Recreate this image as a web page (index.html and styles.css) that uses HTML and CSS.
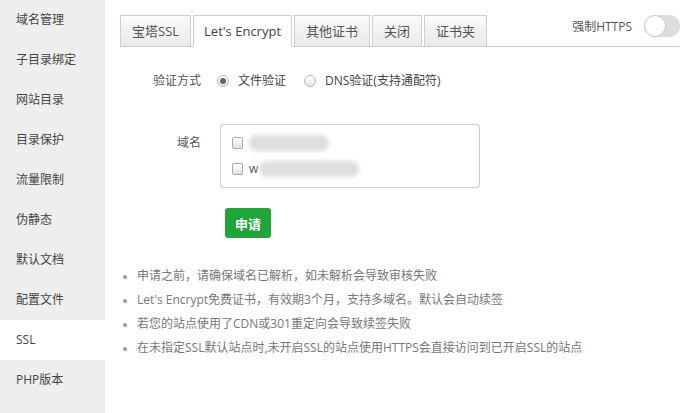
FILE: index.html
```html
<!DOCTYPE html>
<html lang="zh-CN">
<head>
  <meta charset="UTF-8">
  <title>SSL</title>
  <link rel="stylesheet" href="styles.css">
</head>
<body>
<div class="page">
  <ul class="side">
    <li>域名管理</li>
    <li>子目录绑定</li>
    <li>网站目录</li>
    <li>目录保护</li>
    <li>流量限制</li>
    <li>伪静态</li>
    <li>默认文档</li>
    <li>配置文件</li>
    <li class="on">SSL</li>
    <li>PHP版本</li>
  </ul>

  <div class="main">
    <div class="tabbar">
      <span class="tab">宝塔SSL</span>
      <span class="tab on">Let's Encrypt</span>
      <span class="tab">其他证书</span>
      <span class="tab">关闭</span>
      <span class="tab">证书夹</span>
      <div class="force">
        <span>强制HTTPS</span>
        <span class="switch"><i></i></span>
      </div>
    </div>

    <div class="row row-check">
      <label class="lbl">验证方式</label>
      <div class="radios">
        <span class="radio checked"></span><span class="rtext">文件验证</span>
        <span class="radio"></span><span class="rtext">DNS验证(支持通配符)</span>
      </div>
    </div>

    <div class="row row-domain">
      <label class="lbl">域名</label>
      <div class="domains">
        <div class="dom"><span class="cb"></span><span class="blur w80"></span></div>
        <div class="dom"><span class="cb"></span><span class="dtext">w</span><span class="blur w100"></span></div>
      </div>
    </div>

    <div class="row row-btn">
      <span class="lbl"></span>
      <button class="btn">申请</button>
    </div>

    <ul class="tips">
      <li>申请之前，请确保域名已解析，如未解析会导致审核失败</li>
      <li>Let's Encrypt免费证书，有效期3个月，支持多域名。默认会自动续签</li>
      <li>若您的站点使用了CDN或301重定向会导致续签失败</li>
      <li>在未指定SSL默认站点时,未开启SSL的站点使用HTTPS会直接访问到已开启SSL的站点</li>
    </ul>
  </div>
</div>
</body>
</html>
```

FILE: styles.css
```css
* { box-sizing: border-box; }
body {
  margin: 0;
  font-family: "Open Sans", "Noto Sans CJK SC", sans-serif;
  font-size: 12px;
  color: #555;
  background: #fff;
}
.page {
  display: flex;
  height: 413px;
}
.side {
  list-style: none;
  margin: 0;
  padding: 0;
  width: 105px;
  background: #eee;
  flex-shrink: 0;
}
.side li {
  height: 40px;
  line-height: 40px;
  padding-left: 16px;
  color: #444;
}
.side li.on { background: #fff; }

.main {
  flex: 1;
  padding: 15px 6px 0 15px;
}
.tabbar {
  display: flex;
  align-items: flex-end;
  gap: 2px;
  height: 32px;
  border-bottom: 1px solid #ccd;
}
.tab {
  height: 32px;
  line-height: 30px;
  padding: 0 11px;
  font-size: 13px;
  color: #555;
  border: 1px solid #ccd;
  background: linear-gradient(#fafafa, #e9e9e9);
  margin-bottom: -1px;
}
.tab.on {
  background: #fff;
  border-bottom-color: #fff;
  padding: 0 10px;
  color: #444;
}
.force {
  margin-left: auto;
  align-self: flex-start;
  display: flex;
  align-items: center;
  gap: 12px;
  height: 22px;
  color: #555;
}
.switch {
  width: 36px;
  height: 22px;
  border-radius: 11px;
  background: #ddd;
  display: flex;
  align-items: center;
}
.switch i {
  width: 22px;
  height: 22px;
  border-radius: 50%;
  background: #fff;
  border: 1px solid #ccc;
}

.row {
  display: flex;
  align-items: flex-start;
}
.lbl {
  width: 81px;
  text-align: right;
  margin-right: 19px;
  color: #555;
  flex-shrink: 0;
}
.row-check {
  margin-top: 25px;
  line-height: 18px;
}
.radios {
  display: flex;
  align-items: center;
  margin-left: -3px;
}
.radio {
  width: 12px;
  height: 12px;
  border-radius: 50%;
  border: 1px solid #bbb;
  background: linear-gradient(#fff, #e6e6e6);
  margin-right: 9px;
  position: relative;
}
.radio.checked::after {
  content: "";
  position: absolute;
  left: 2px;
  top: 2px;
  width: 6px;
  height: 6px;
  border-radius: 50%;
  background: #666;
}
.rtext { margin-right: 18px; color: #444; }

.row-domain {
  margin-top: 34px;
}
.row-domain .lbl { margin-top: 9px; }
.domains {
  width: 260px;
  height: 64px;
  border: 1px solid #ccc;
  border-radius: 3px;
  padding: 9px 11px;
}
.dom {
  display: flex;
  align-items: center;
  height: 17px;
  margin-bottom: 9px;
}
.cb {
  width: 11px;
  height: 12px;
  border: 1px solid #aaa;
  border-radius: 2px;
  background: linear-gradient(#fff, #e3e3e3);
  margin-right: 6px;
}
.dtext { color: #555; margin-right: 1px; }
.blur {
  height: 16px;
  border-radius: 8px;
  background: #dedede;
  filter: blur(2px);
}
.w80 { width: 80px; }
.w100 { width: 100px; }

.row-btn { margin-top: 20px; }
.btn {
  width: 46px;
  height: 30px;
  margin-left: 5px;
  border: none;
  border-radius: 3px;
  background: #20a53a;
  color: #fff;
  font-family: inherit;
  font-size: 13px;
  font-weight: bold;
  padding: 0;
}

.tips {
  margin: 26px 0 0;
  padding-left: 17px;
  color: #777;
  line-height: 24px;
}
.tips li::marker { color: #999; font-size: 10px; }
```
